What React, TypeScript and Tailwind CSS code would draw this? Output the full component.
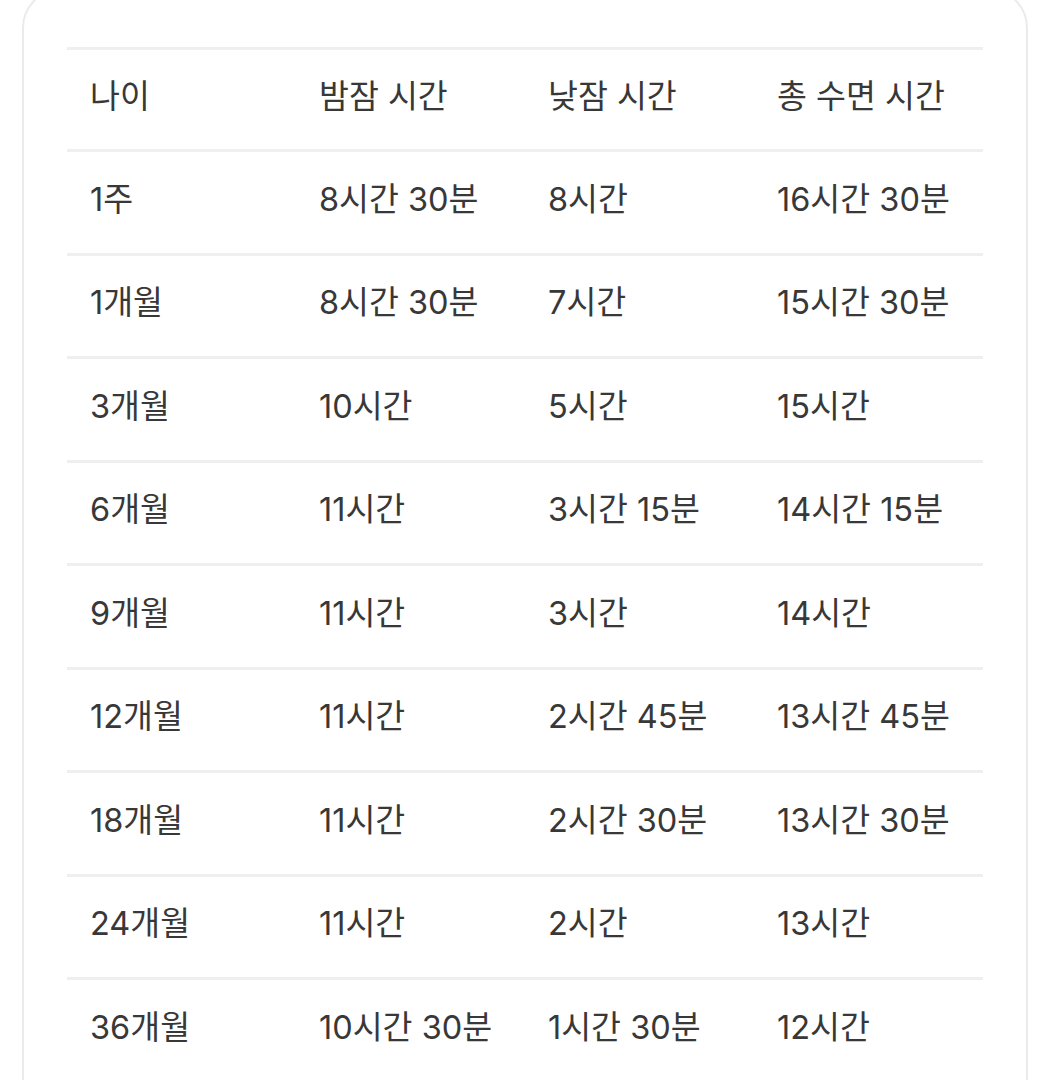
const rows: [string, string, string, string][] = [
  ['1주', '8시간 30분', '8시간', '16시간 30분'],
  ['1개월', '8시간 30분', '7시간', '15시간 30분'],
  ['3개월', '10시간', '5시간', '15시간'],
  ['6개월', '11시간', '3시간 15분', '14시간 15분'],
  ['9개월', '11시간', '3시간', '14시간'],
  ['12개월', '11시간', '2시간 45분', '13시간 45분'],
  ['18개월', '11시간', '2시간 30분', '13시간 30분'],
  ['24개월', '11시간', '2시간', '13시간'],
  ['36개월', '10시간 30분', '1시간 30분', '12시간'],
];

const head = ['나이', '밤잠 시간', '낮잠 시간', '총 수면 시간'];

export default function App() {
  return (
    <div
      className="h-[1080px] w-[1051px] overflow-hidden bg-white"
      style={{ fontFamily: 'Inter, "Noto Sans CJK KR", "Noto Sans", sans-serif' }}
    >
      <div className="ml-[22px] mt-[-12px] w-[1006px] rounded-[40px] border-2 border-[#ebebeb] px-[43px] pt-[57px] pb-10">
        <table className="w-full table-fixed border-collapse text-[32.5px] text-[#383838]">
          <thead>
            <tr className="h-[102px] border-y-[3px] border-[#efefef]">
              {head.map((h) => (
                <th key={h} className="pl-[23px] pb-[5px] text-left font-normal">
                  {h}
                </th>
              ))}
            </tr>
          </thead>
          <tbody>
            {rows.map((r) => (
              <tr key={r[0]} className="h-[103.5px] border-b-[3px] border-[#efefef]">
                {r.map((c, i) => (
                  <td key={i} className="pl-[23px] pb-[4px] text-left">
                    {c}
                  </td>
                ))}
              </tr>
            ))}
          </tbody>
        </table>
      </div>
    </div>
  );
}
